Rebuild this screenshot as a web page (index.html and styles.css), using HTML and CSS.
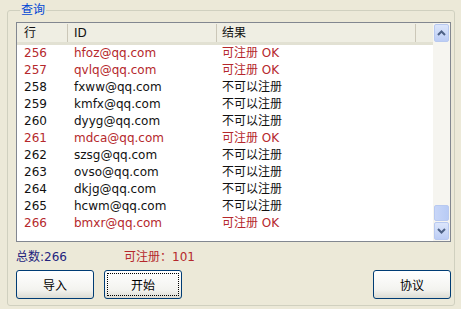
FILE: index.html
```html
<!DOCTYPE html>
<html lang="zh">
<head>
    <meta charset="UTF-8">
    <title>查询</title>
    <link rel="stylesheet" href="styles.css">
</head>
<body>
    <fieldset class="group">
        <legend>查询</legend>

        <div class="list">
            <div class="rows">
                <div class="head">
                    <span class="c-no">行</span>
                    <span class="c-id">ID</span>
                    <span class="c-res">结果</span>
                    <span class="c-fill"></span>
                </div>
                <div class="row ok"><span class="c-no">256</span><span class="c-id">hfoz@qq.com</span><span class="c-res">可注册 OK</span></div>
                <div class="row ok"><span class="c-no">257</span><span class="c-id">qvlq@qq.com</span><span class="c-res">可注册 OK</span></div>
                <div class="row"><span class="c-no">258</span><span class="c-id">fxww@qq.com</span><span class="c-res">不可以注册</span></div>
                <div class="row"><span class="c-no">259</span><span class="c-id">kmfx@qq.com</span><span class="c-res">不可以注册</span></div>
                <div class="row"><span class="c-no">260</span><span class="c-id">dyyg@qq.com</span><span class="c-res">不可以注册</span></div>
                <div class="row ok"><span class="c-no">261</span><span class="c-id">mdca@qq.com</span><span class="c-res">可注册 OK</span></div>
                <div class="row"><span class="c-no">262</span><span class="c-id">szsg@qq.com</span><span class="c-res">不可以注册</span></div>
                <div class="row"><span class="c-no">263</span><span class="c-id">ovso@qq.com</span><span class="c-res">不可以注册</span></div>
                <div class="row"><span class="c-no">264</span><span class="c-id">dkjg@qq.com</span><span class="c-res">不可以注册</span></div>
                <div class="row"><span class="c-no">265</span><span class="c-id">hcwm@qq.com</span><span class="c-res">不可以注册</span></div>
                <div class="row ok"><span class="c-no">266</span><span class="c-id">bmxr@qq.com</span><span class="c-res">可注册 OK</span></div>
            </div>
            <div class="scroll">
                <div class="arrow">
                    <svg width="9" height="6" viewBox="0 0 9 6"><path d="M1 5 L4.5 1.5 L8 5" fill="none" stroke="#4d6185" stroke-width="2"/></svg>
                </div>
                <div class="track"></div>
                <div class="thumb"></div>
                <div class="arrow">
                    <svg width="9" height="6" viewBox="0 0 9 6"><path d="M1 1 L4.5 4.5 L8 1" fill="none" stroke="#4d6185" stroke-width="2"/></svg>
                </div>
            </div>
        </div>

        <div class="stats">
            <span class="total">总数:266</span>
            <span class="avail">可注册：101</span>
        </div>

        <div class="buttons">
            <button class="btn">导入</button>
            <button class="btn focus">开始</button>
            <span class="spacer"></span>
            <button class="btn">协议</button>
        </div>
    </fieldset>
</body>
</html>
```

FILE: styles.css
```css
body {
    margin: 0;
    padding: 3px 6px 0 7px;
    background: #ece9d8;
    font-family: "DejaVu Sans", "Noto Sans CJK SC", sans-serif;
    font-size: 12px;
    color: #111;
}

.group {
    margin: 0;
    padding: 4px 3px 6px 8px;
    border: 1px solid #d0d0bf;
    border-radius: 3px;
}

.group legend {
    padding: 0 1px;
    margin-left: 4px;
    color: #0046d5;
    font-size: 12px;
    line-height: 15px;
}

.list {
    display: flex;
    height: 220px;
    border: 1px solid #828790;
    background: #fff;
    box-sizing: border-box;
}

.rows {
    flex: 1;
    overflow: hidden;
}

.head {
    display: flex;
    height: 22px;
    align-items: center;
    background: #efeee3;
    border-bottom: 3px solid #e2e1d3;
    box-sizing: border-box;
    line-height: 18px;
}

.head span {
    height: 18px;
    border-right: 1px solid #cbc7b8;
    box-sizing: border-box;
}

.head .c-fill {
    flex: 1;
    border-right: none;
}

.row {
    display: flex;
    height: 17px;
    line-height: 17px;
}

.row.ok {
    color: #b5282c;
}

.c-no {
    width: 51px;
    padding-left: 7px;
    box-sizing: border-box;
}

.c-id {
    width: 149px;
    padding-left: 6px;
    box-sizing: border-box;
}

.c-res {
    width: 199px;
    padding-left: 5px;
    box-sizing: border-box;
}

.scroll {
    width: 17px;
    display: flex;
    flex-direction: column;
    background: #f6f5f0;
    padding: 1px 0;
    box-sizing: border-box;
}

.arrow {
    height: 16px;
    margin: 0 1px;
    border: 1px solid #b8c9f0;
    border-radius: 2px;
    background: linear-gradient(#dce6fb, #bccdf5);
    display: flex;
    align-items: center;
    justify-content: center;
}

.track {
    flex: 1;
}

.thumb {
    height: 14px;
    margin: 0 1px 1px;
    border: 1px solid #b8c9f0;
    border-radius: 2px;
    background: linear-gradient(90deg, #c8d6f8, #b8cbf5);
}

.stats {
    display: flex;
    height: 24px;
    align-items: center;
    padding-top: 2px;
    box-sizing: border-box;
}

.total {
    color: #23237e;
    width: 108px;
}

.avail {
    color: #b5282c;
}

.buttons {
    display: flex;
    gap: 10px;
    padding-top: 4px;
}

.spacer {
    flex: 1;
}

.btn {
    width: 78px;
    height: 29px;
    font-family: "Noto Sans CJK SC", sans-serif;
    font-size: 12px;
    color: #000;
    border: 1px solid #003c74;
    border-radius: 3px;
    background: linear-gradient(#ffffff, #f3f3ef 70%, #dcdcd3);
    padding: 0;
}

.btn.focus {
    outline: 1px dotted #000;
    outline-offset: -4px;
}
```
